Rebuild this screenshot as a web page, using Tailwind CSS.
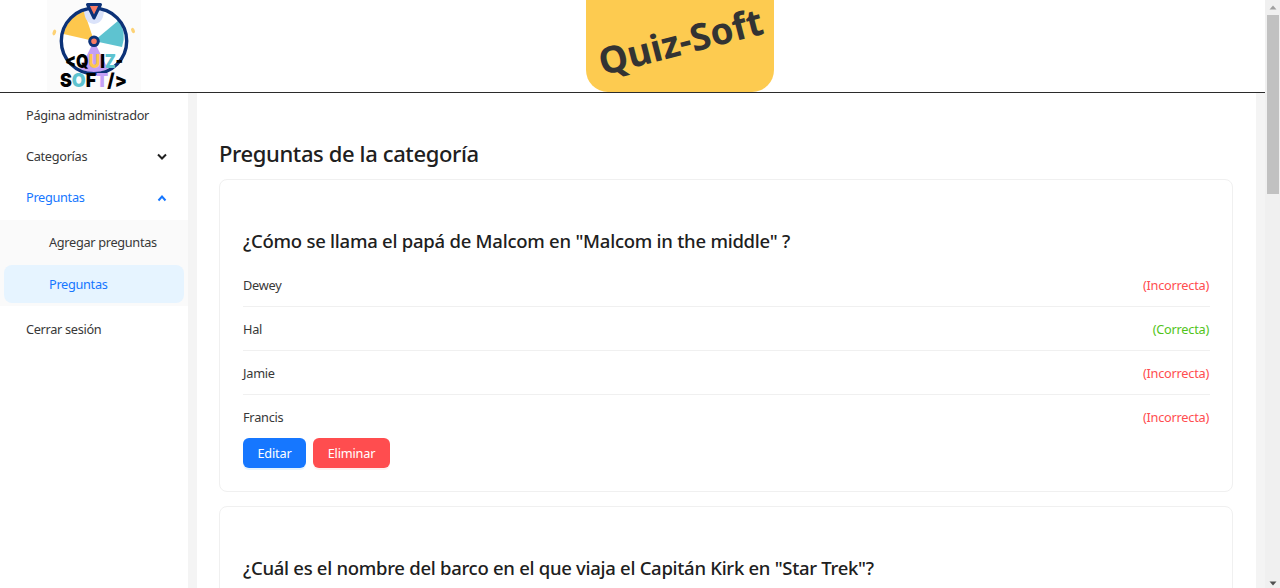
<!DOCTYPE html>
<html lang="es">
<head>
<meta charset="utf-8">
<title>Quiz-Soft</title>
<script src="https://cdn.jsdelivr.net/npm/@tailwindcss/browser@4"></script>
</head>
<body class="h-[588px] w-[1280px] overflow-hidden bg-white font-['Noto_Sans','Open_Sans',sans-serif] text-[12.75px] text-[#383838]">
<div class="flex h-[588px]">
  <div class="flex w-[1265px] flex-col">
    <header class="flex h-[93px] shrink-0 border-b border-[#2b2b2b] bg-white">
      <svg class="ml-[47px] h-[92px] w-[94px] shrink-0" viewBox="47 0 94 92">
        <rect x="47" y="0" width="94" height="92" fill="#fbfbfb"/>
        <circle cx="94" cy="41" r="33" fill="#fff"/>
        <path d="M94 41L63.500 34A32 32 0 0 1 84 11Z" fill="#fdc74d"/>
        <path d="M94 41L119 20A32 32 0 0 1 122 47Z" fill="#5ec3d0"/>
        <path d="M94 41L108 69A32 32 0 0 1 80 69Z" fill="#c3a0f5"/>
        <path d="M84 9h20q0 14-10 15q-10-1-10-15Z" fill="#dbe3fa"/>
        <circle cx="94" cy="41" r="32.700" fill="none" stroke="#0c3278" stroke-width="3.400"/>
        <path d="M87.500 4.500h13L94 18Z" fill="#f97c64" stroke="#0c3278" stroke-width="3" stroke-linejoin="round"/>
        <circle cx="94" cy="41.300" r="4.300" fill="#f97c64" stroke="#0c3278" stroke-width="3"/>
        <ellipse cx="54.300" cy="32.500" rx="1.700" ry="3" fill="#fdd275" transform="rotate(20 54.300 32.500)"/>
        <ellipse cx="133" cy="30.500" rx="1.700" ry="2.800" fill="#fdd275" transform="rotate(-25 133 30.500)"/>
        <g font-family="Inter, sans-serif" font-weight="900" font-size="19">
          <text x="65" y="68" textLength="58" lengthAdjust="spacingAndGlyphs" fill="#000">&lt;Q<tspan fill="#fdc74d">U</tspan>I<tspan fill="#5ec3d0">Z</tspan>-</text>
          <text x="60" y="87" textLength="67" lengthAdjust="spacingAndGlyphs" fill="#000">S<tspan fill="#5ec3d0">O</tspan>F<tspan fill="#c3a0f5">T</tspan>/&gt;</text>
        </g>
      </svg>
      <div class="ml-[445px] flex h-[92px] w-[188px] items-center justify-center rounded-b-[22px] bg-[#fdcb50]">
        <svg class="h-[92px] w-[188px] overflow-visible" viewBox="0 0 188 92"><text x="16.500" y="75.500" transform="rotate(-14.500 16.500 75.500)" textLength="168" lengthAdjust="spacingAndGlyphs" font-family="Noto Sans, sans-serif" font-weight="700" font-size="37" fill="#333">Quiz-Soft</text></svg>
      </div>
    </header>
    <div class="flex min-h-0 flex-1 bg-[#f4f4f4]">
      <nav class="w-[188px] shrink-0 bg-white pt-[2px] tracking-[-0.32px]">
        <div class="flex h-[41px] items-center pl-[26px]">Página administrador</div>
        <div class="flex h-[41px] items-center justify-between pr-[20px] pl-[26px]"><span>Categorías</span>
          <svg class="h-3 w-3" viewBox="0 0 12 12" fill="none" stroke="#202020" stroke-width="2"><path d="M2 3.500l4 4l4-4"/></svg></div>
        <div class="flex h-[43px] items-center justify-between pr-[20px] pb-px pl-[26px] text-[#1677ff]"><span>Preguntas</span>
          <svg class="h-3 w-3" viewBox="0 0 12 12" fill="none" stroke="#1677ff" stroke-width="2"><path d="M2.500 8.500l3.500-4l3.500 4"/></svg></div>
        <div class="h-[86px] bg-[#fafafa] px-1 pt-[4px]">
          <div class="flex h-[37px] items-center pl-[45px]">Agregar preguntas</div>
          <div class="mt-[4px] flex h-[38px] items-center rounded-[8px] bg-[#e6f4ff] pt-px pl-[45px] text-[#1677ff]">Preguntas</div>
        </div>
        <div class="flex h-[47px] items-center pl-[26px]">Cerrar sesión</div>
      </nav>
      <main class="ml-[9px] w-[1059px] overflow-hidden bg-white pr-[23px] pl-[22px] pt-[45px] text-[#202020]">
        <h1 class="h-[41px] text-[22px] leading-[30px] font-medium tracking-[-0.38px]">Preguntas de la categoría</h1>
        <section class="h-[313px] rounded-[8px] border border-[#f0f0f0] px-[23px] pt-[46px]">
          <h2 class="h-[37px] text-[18.500px] leading-[30px] font-medium tracking-[-0.25px]">¿Cómo se llama el papá de Malcom en "Malcom in the middle" ?</h2>
          <ul class="-mr-px text-[12.75px] tracking-[-0.25px] text-[#383838]">
            <li class="flex h-[44px] items-center justify-between border-b border-[#f0f0f0] pt-[2px]"><span>Dewey</span><span class="pr-px text-[#ff4d4f]">(Incorrecta)</span></li>
            <li class="flex h-[44px] items-center justify-between border-b border-[#f0f0f0] pt-[2px]"><span>Hal</span><span class="pr-px text-[#52c41a]">(Correcta)</span></li>
            <li class="flex h-[44px] items-center justify-between border-b border-[#f0f0f0] pt-[2px]"><span>Jamie</span><span class="pr-px text-[#ff4d4f]">(Incorrecta)</span></li>
            <li class="flex h-[43px] items-center justify-between pt-[2px]"><span>Francis</span><span class="pr-px text-[#ff4d4f]">(Incorrecta)</span></li>
          </ul>
          <div class="flex gap-[7px] tracking-[-0.2px] text-white">
            <button class="h-[30px] w-[63px] rounded-[6px] bg-[#1677ff] pt-px shadow-[0_2px_0_rgba(5,145,255,0.1)]">Editar</button>
            <button class="h-[30px] w-[77px] rounded-[6px] bg-[#ff4d4f] pt-px shadow-[0_2px_0_rgba(255,38,5,0.06)]">Eliminar</button>
          </div>
        </section>
        <section class="mt-[14px] h-[313px] rounded-[8px] border border-[#f0f0f0] px-[23px] pt-[46px]">
          <h2 class="text-[18.500px] leading-[30px] font-medium tracking-[-0.285px]">¿Cuál es el nombre del barco en el que viaja el Capitán Kirk en "Star Trek"?</h2>
        </section>
      </main>
    </div>
  </div>
  <div class="flex w-[15px] flex-col items-center bg-[#f0f0f0]">
    <svg class="h-[15px] w-[15px]" viewBox="0 0 15 15"><path d="M4.500 9.500l3.500-4l3.500 4z" fill="#a0a0a0"/></svg>
    <div class="ml-px h-[179px] w-[12px] bg-[#c1c1c1]"></div>
    <svg class="mt-auto h-[15px] w-[15px]" viewBox="0 0 15 15"><path d="M4.500 8.500l3.500 4l3.500-4z" fill="#505050"/></svg>
  </div>
</div>
</body>
</html>
